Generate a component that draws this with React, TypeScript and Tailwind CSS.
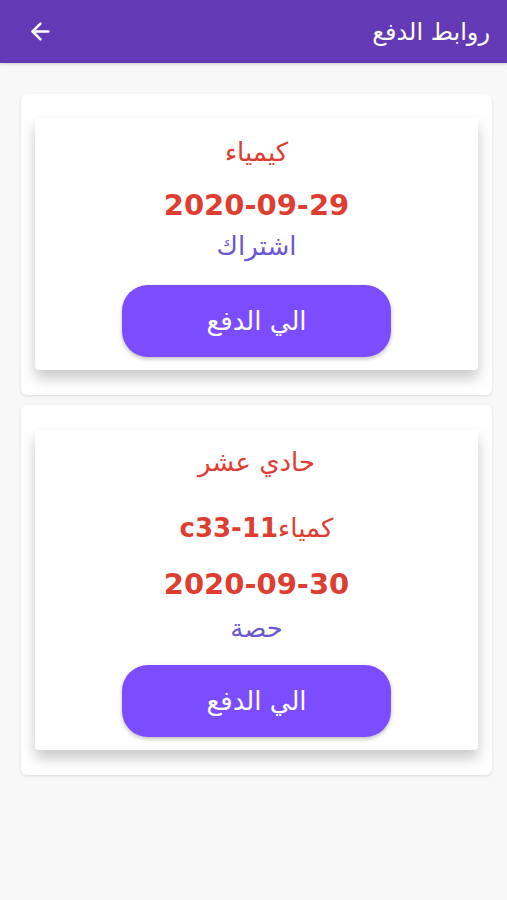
import React from "react";
import { ArrowLeft } from "lucide-react";

const font = { fontFamily: '"DejaVu Sans", "Noto Sans", sans-serif' };

function PayButton() {
  return (
    <button className="w-[269px] h-[72px] rounded-[26px] bg-[#7c4dff] text-white text-[26px] shadow-[0_2px_4px_rgba(0,0,0,0.25)] flex items-center justify-center">
      الي الدفع
    </button>
  );
}

export default function App() {
  return (
    <div dir="rtl" style={font} className="w-[507px] h-[900px] bg-[#f8f8f8] flex flex-col">
      <div className="h-[63px] bg-[#6439b5] flex items-center justify-between pr-[17px] pl-[27px] shadow-[0_1px_3px_rgba(0,0,0,0.2)]">
        <div className="text-white text-[24px]">روابط الدفع</div>
        <ArrowLeft className="text-white" size={27} strokeWidth={2.2} />
      </div>

      <div className="flex flex-col gap-[10px] pt-[31px] px-[15px] pl-[21px]">
        <div className="w-[471px] bg-white rounded-[6px] shadow-[0_1px_3px_rgba(0,0,0,0.12)] px-[14px] pt-[24px] pb-[25px]">
          <div className="bg-white rounded-[4px] shadow-[0_8px_14px_rgba(0,0,0,0.22)] flex flex-col items-center pt-[19px] pb-[13px]">
            <div className="h-[30px] flex items-center text-[26px] text-[#de3d31]">كيمياء</div>
            <div className="mt-[21px] h-[36px] flex items-center text-[29px] font-bold text-[#de3d31]">2020-09-29</div>
            <div className="mt-[7px] h-[30px] flex items-center text-[26px] text-[#6a57d2]">اشتراك</div>
            <div className="mt-[24px]"><PayButton /></div>
          </div>
        </div>

        <div className="w-[471px] bg-white rounded-[6px] shadow-[0_1px_3px_rgba(0,0,0,0.12)] px-[14px] pt-[25px] pb-[25px]">
          <div className="bg-white rounded-[4px] shadow-[0_8px_14px_rgba(0,0,0,0.22)] flex flex-col items-center pt-[17px] pb-[13px]">
            <div className="h-[30px] flex items-center text-[26px] text-[#de3d31]">حادي عشر</div>
            <div className="mt-[33px] h-[36px] flex items-center text-[#de3d31]">
              <span className="text-[26px]">كمياء</span>
              <span className="text-[26px] font-bold">c33-11</span>
            </div>
            <div className="mt-[21px] h-[36px] flex items-center text-[29px] font-bold text-[#de3d31]">2020-09-30</div>
            <div className="mt-[10px] h-[30px] flex items-center text-[26px] text-[#6a57d2]">حصة</div>
            <div className="mt-[22px]"><PayButton /></div>
          </div>
        </div>
      </div>
    </div>
  );
}
